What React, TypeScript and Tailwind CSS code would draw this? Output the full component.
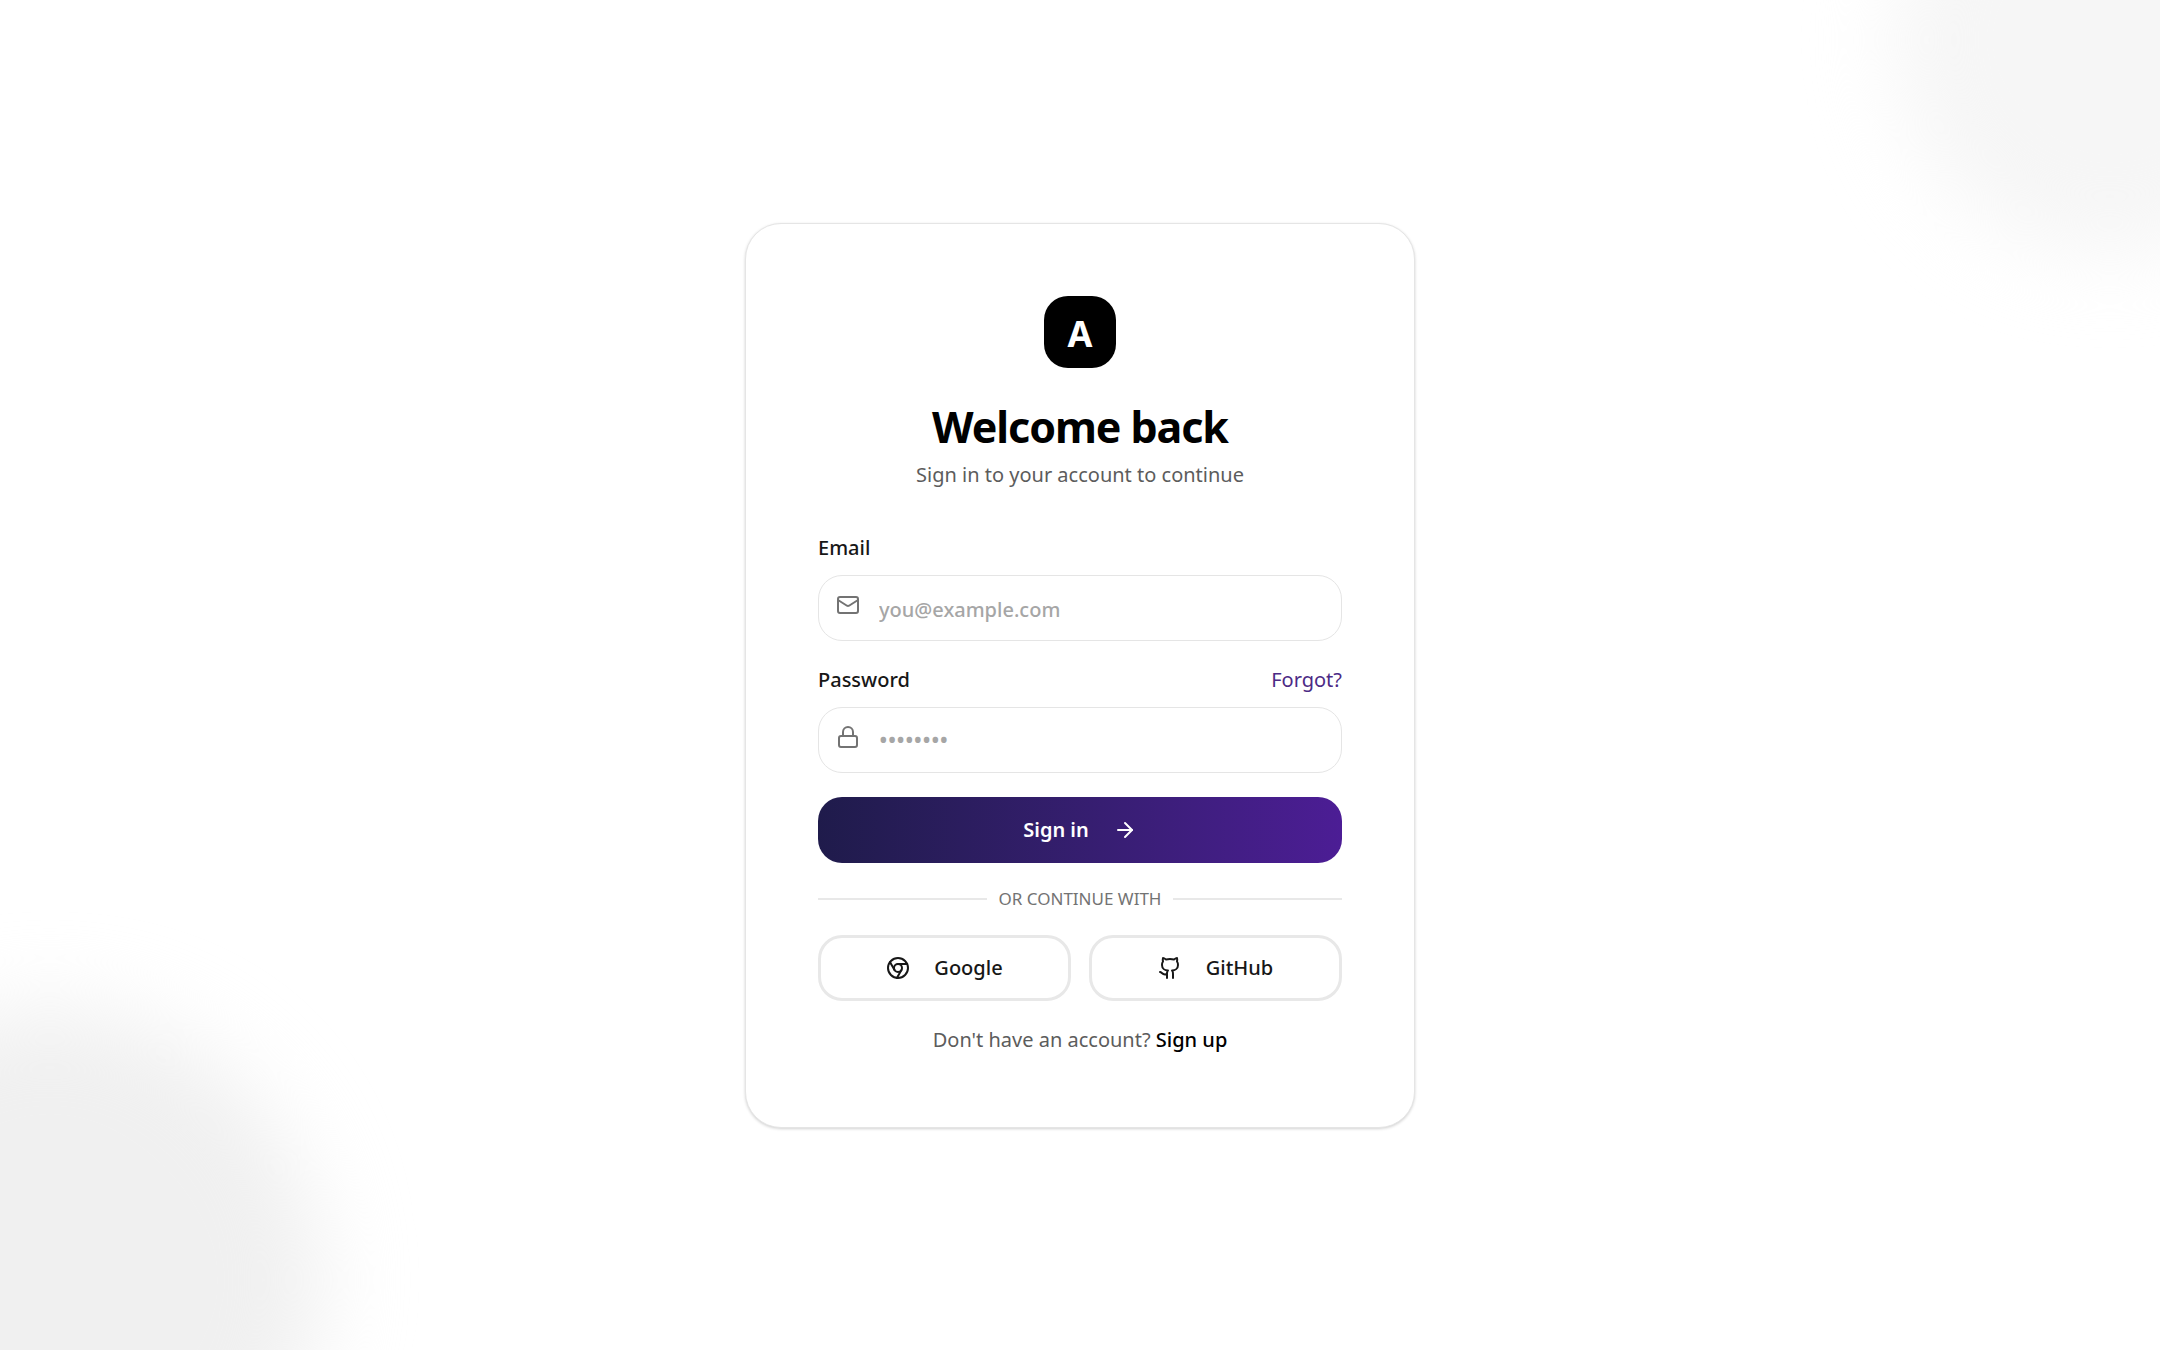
import { useState } from 'react';
import { ArrowRight, Chrome, Github, Lock, Mail } from 'lucide-react';

const inputClass =
  'block w-full h-[66px] rounded-3xl border border-[#e5e5e5] bg-white pl-[60px] pr-6 pt-1 text-[20px] font-medium text-[#171717] placeholder:text-[#a6a6a6] focus:outline-none focus:border-[#4c1d95]';

const socialClass =
  'flex h-[66px] items-center justify-center gap-6 rounded-3xl border-[3px] border-[#e8e8e8] bg-white text-[20px] font-medium text-[#171717] hover:bg-gray-50';

export default function App() {
  const [email, setEmail] = useState('');
  const [password, setPassword] = useState('');

  const handleSubmit = (e: React.FormEvent<HTMLFormElement>) => {
    e.preventDefault();
  };

  return (
    <div className="relative flex min-h-screen items-center justify-center overflow-hidden bg-white font-['Noto_Sans',sans-serif]">
      {/* Background blobs */}
      <div className="absolute -top-[175px] -right-[165px] size-[430px] rounded-full bg-[#f6f6f6] blur-[40px]" />
      <div className="absolute -bottom-[200px] -left-[220px] size-[540px] rounded-full bg-[#f0f0f0] blur-[42px]" />

      <main className="relative w-full max-w-[670px] rounded-[36px] border border-[#e5e5e5] bg-white p-18 shadow-[0_1px_3px_rgba(0,0,0,0.18)]">
        <div className="flex flex-col items-center text-center">
          <div className="flex size-18 items-center justify-center rounded-3xl bg-black pt-1 text-[36px] font-bold text-white">
            A
          </div>
          <h1 className="mt-8 text-[43px] leading-[54px] font-bold tracking-tight text-black">Welcome back</h1>
          <p className="mt-1.5 text-[20px] leading-[30px] text-[#5c5c5c]">Sign in to your account to continue</p>
        </div>

        <form onSubmit={handleSubmit} className="mt-[43px] flex flex-col gap-6">
          <div>
            <label htmlFor="email" className="block text-[20px] leading-[30px] font-medium text-[#171717]">
              Email
            </label>
            <div className="relative mt-3">
              <Mail className="absolute top-[18px] left-[18px] size-6 text-[#737373]" />
              <input
                id="email"
                type="email"
                value={email}
                onChange={(e) => setEmail(e.target.value)}
                placeholder="you@example.com"
                className={inputClass}
              />
            </div>
          </div>

          <div>
            <div className="flex items-center justify-between text-[20px] leading-[30px]">
              <label htmlFor="password" className="font-medium text-[#171717]">
                Password
              </label>
              <a href="#forgot" className="text-[#4c2a85] hover:underline">
                Forgot?
              </a>
            </div>
            <div className="relative mt-3">
              <Lock className="absolute top-[18px] left-[18px] size-6 text-[#737373]" />
              <input
                id="password"
                type="password"
                value={password}
                onChange={(e) => setPassword(e.target.value)}
                placeholder="••••••••"
                className={`${inputClass} placeholder:text-[23px]`}
              />
            </div>
          </div>

          <button
            type="submit"
            className="flex h-[66px] w-full items-center justify-center gap-6 rounded-3xl bg-linear-to-r from-[#1f1b4b] to-[#4c1d95] text-[20px] font-semibold text-white"
          >
            Sign in
            <ArrowRight className="size-6" />
          </button>
        </form>

        <div className="mt-6 flex items-center gap-3">
          <div className="h-0.5 flex-1 bg-[#e8e8e8]" />
          <span className="text-[17px] leading-6 text-[#737373] uppercase">Or continue with</span>
          <div className="h-0.5 flex-1 bg-[#e8e8e8]" />
        </div>

        <div className="mt-6 grid grid-cols-2 gap-[18px]">
          <button type="button" className={socialClass}>
            <Chrome className="size-6" />
            Google
          </button>
          <button type="button" className={socialClass}>
            <Github className="size-6" />
            GitHub
          </button>
        </div>

        <p className="mt-6 text-center text-[20px] leading-[30px] text-[#5c5c5c]">
          Don't have an account?{' '}
          <a href="#signup" className="font-medium text-black hover:underline">
            Sign up
          </a>
        </p>
      </main>
    </div>
  );
}
